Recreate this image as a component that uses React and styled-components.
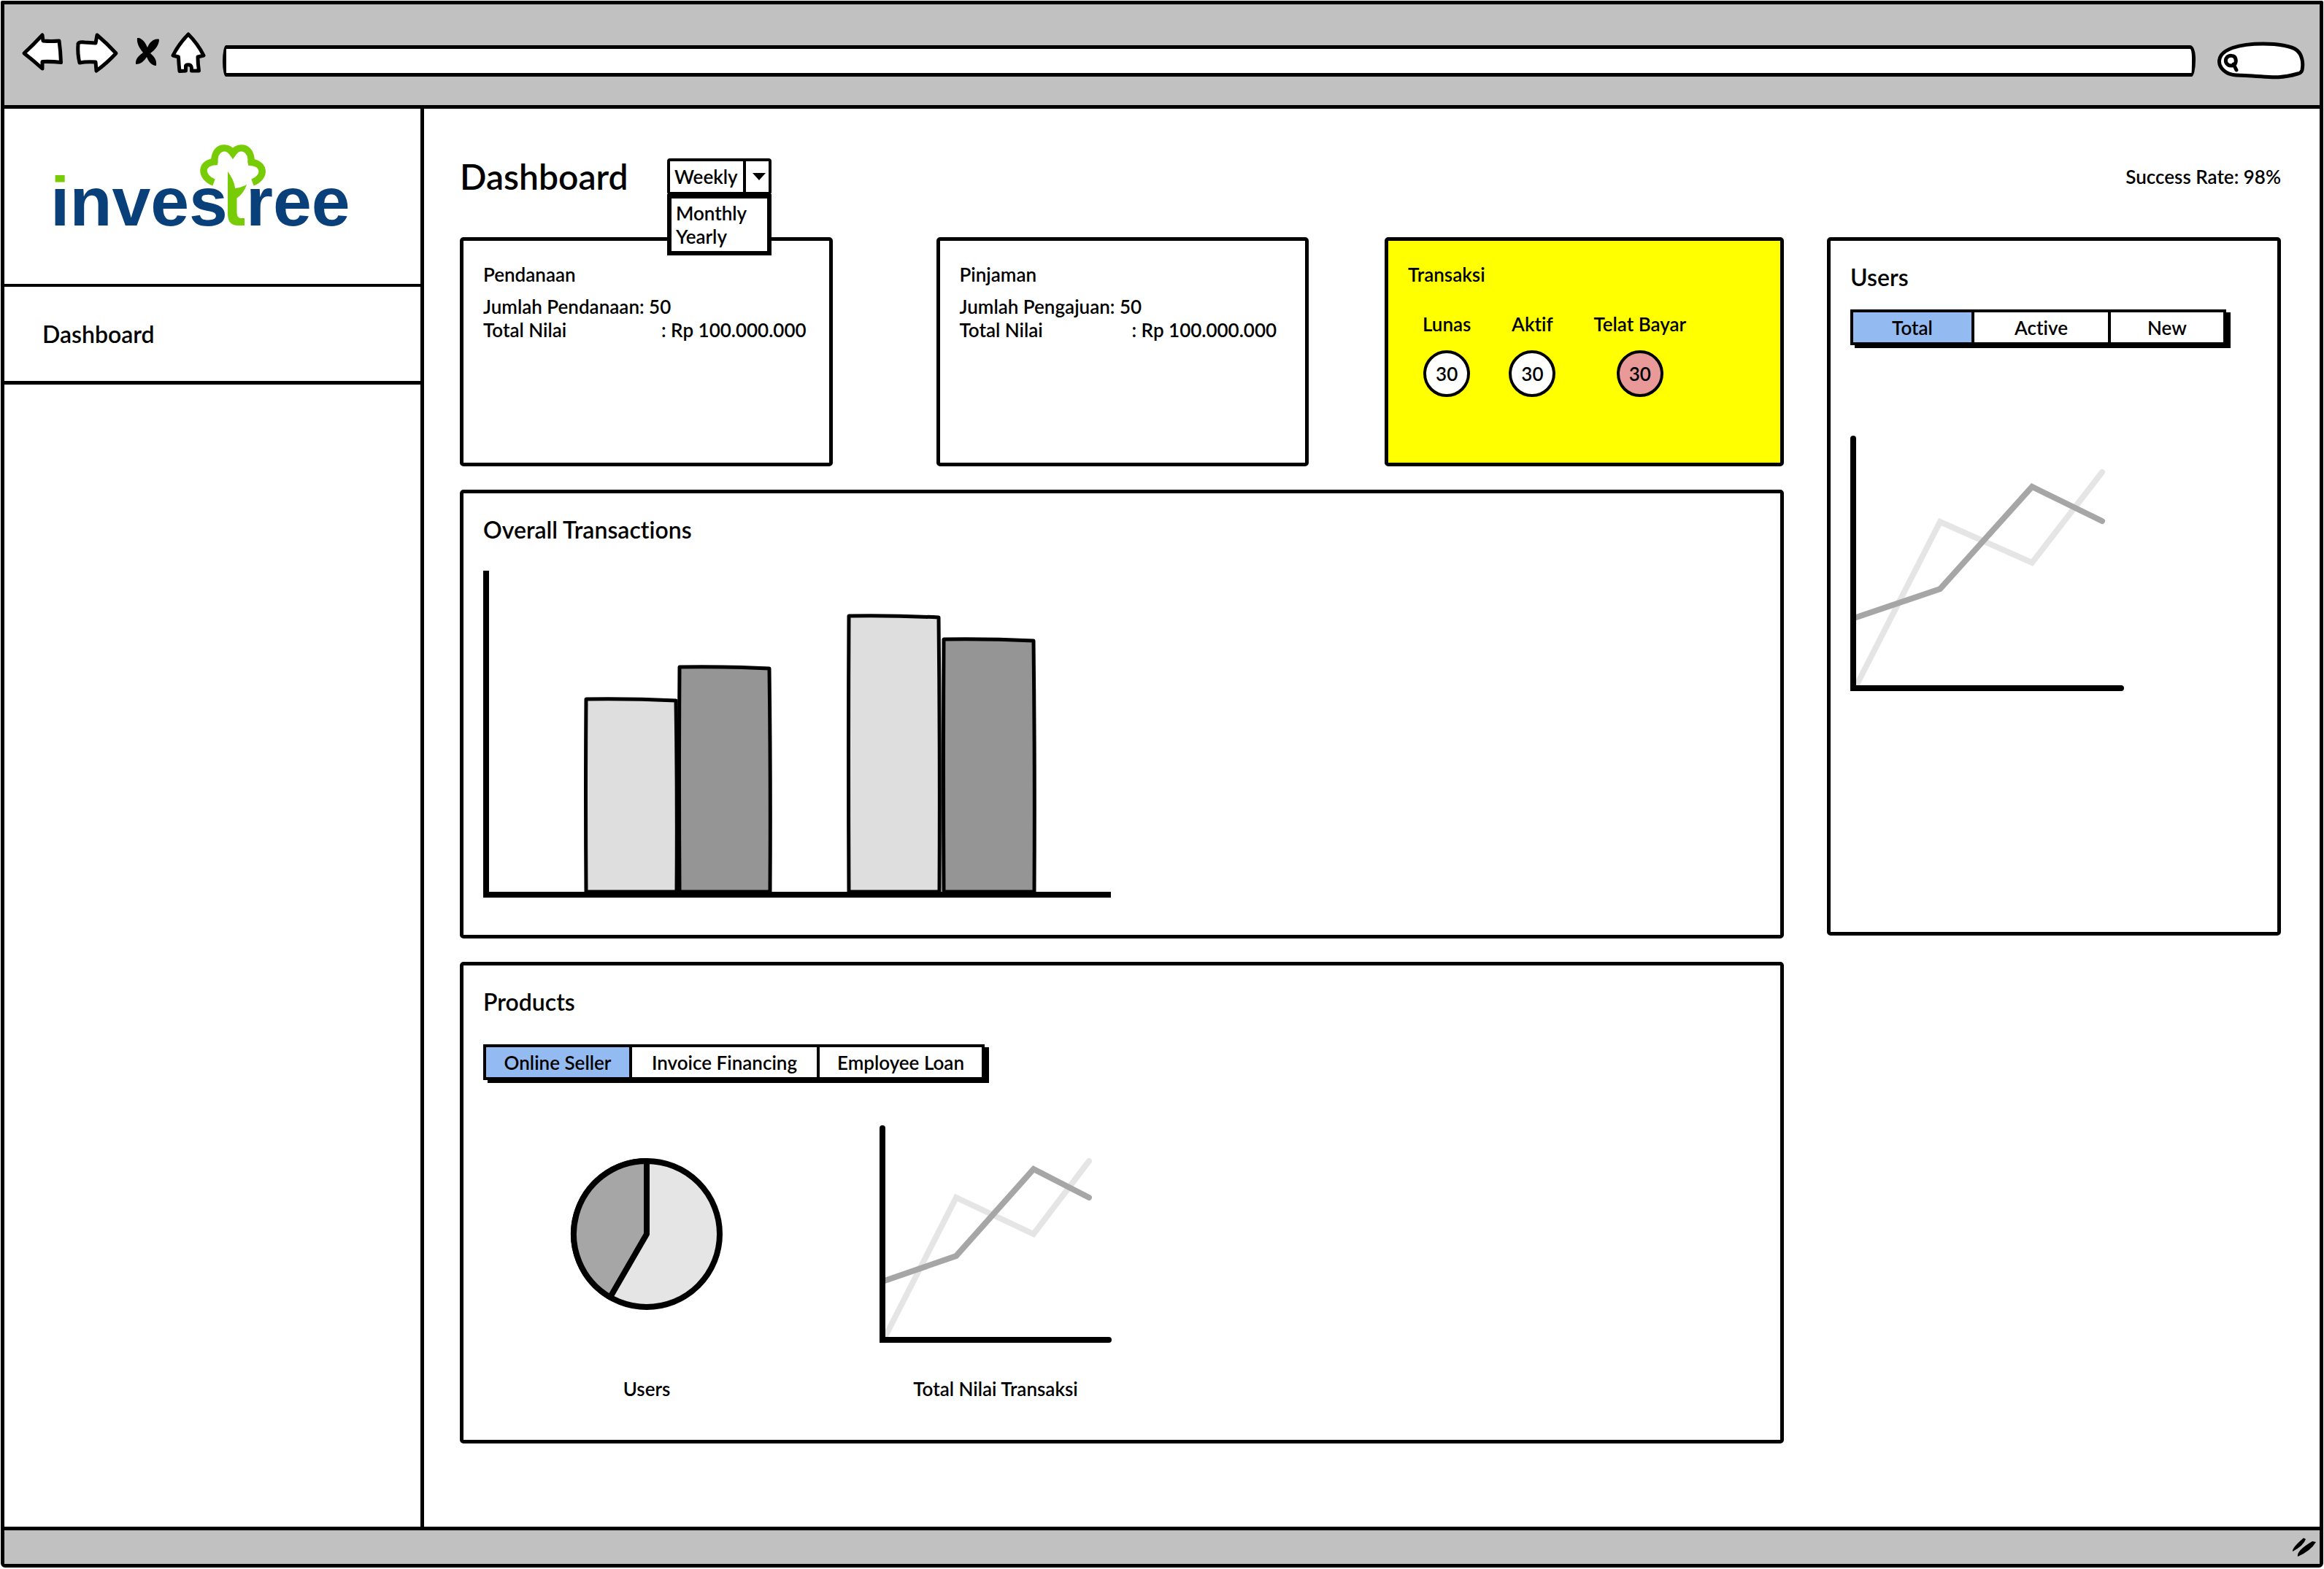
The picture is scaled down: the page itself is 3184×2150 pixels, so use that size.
import React, { useState } from "react";
import styled, { createGlobalStyle } from "styled-components";

const ink = "#000";
const chrome = "#c1c1c1";
const green = "#77cc05";
const navy = "#0a4079";

const GlobalStyle = createGlobalStyle`
  *, *::before, *::after { box-sizing: border-box; }
  body {
    margin: 0;
    background: #fff;
    color: ${ink};
    font-family: Lato, "Open Sans", sans-serif;
    font-size: 26px;
    font-weight: 600;
    font-variant-ligatures: none;
    line-height: 32px;
  }
  button, input, select { font: inherit; color: inherit; }
`;

/* ---------- browser frame ---------- */

const Page = styled.div`
  display: flex;
  min-height: 100vh;
  padding: 1px 1px 2px 1px;
`;

const Window = styled.div`
  flex: 1;
  display: flex;
  flex-direction: column;
  border: 5px solid ${ink};
  border-radius: 2px 2px 6px 6px;
  overflow: hidden;
`;

const Toolbar = styled.header`
  display: flex;
  align-items: center;
  height: 143px;
  padding: 0 20px 0 24px;
  background: ${chrome};
  border-bottom: 5px solid ${ink};
`;

const NavButtons = styled.nav`
  display: flex;
  align-items: center;
  gap: 18px;
  margin: 0 24px 4px 0;
`;

const IconButton = styled.button`
  display: flex;
  padding: 0;
  border: 0;
  background: none;
  cursor: pointer;
`;

const AddressBar = styled.input`
  flex: 1;
  min-width: 0;
  height: 43px;
  margin-top: 16px;
  padding: 0 12px;
  border: 5px solid ${ink};
  border-radius: 5px 8px 6px 5px / 24px 18px 24px 22px;
  background: #fff;
`;

const SearchBox = styled.label`
  position: relative;
  display: flex;
  width: 120px;
  height: 52px;
  margin: 16px 0 0 30px;
`;

const SearchShape = styled.svg`
  position: absolute;
  inset: 0;
`;

const SearchInput = styled.input`
  position: relative;
  width: 100%;
  padding: 0 12px 0 36px;
  border: 0;
  background: transparent;
`;

const StatusBar = styled.footer`
  display: flex;
  align-items: center;
  justify-content: flex-end;
  height: 51px;
  padding-right: 4px;
  background: ${chrome};
  border-top: 5px solid ${ink};
`;

const Body = styled.div`
  flex: 1;
  display: flex;
`;

/* ---------- sidebar ---------- */

const Sidebar = styled.aside`
  flex: none;
  width: 575px;
  border-right: 5px solid ${ink};
`;

const Brand = styled.div`
  height: 244px;
  padding: 48px 0 0 64px;
  border-bottom: 4px solid ${ink};
`;

const SideLink = styled.a`
  display: flex;
  align-items: center;
  height: 134px;
  padding-left: 52px;
  border-bottom: 5px solid ${ink};
  color: inherit;
  font-size: 32px;
  line-height: 40px;
  text-decoration: none;
`;

/* ---------- main area ---------- */

const Main = styled.main`
  flex: 1;
  min-width: 0;
  padding: 68px 53px 40px 49px;
`;

const PageHeader = styled.div`
  display: flex;
  align-items: center;
  margin-bottom: 58px;
`;

const PageTitle = styled.h1`
  margin: 0;
  width: 284px;
  font-size: 48px;
  font-weight: 600;
  line-height: 48px;
`;

const SuccessRate = styled.p`
  margin: 0 0 0 auto;
`;

const Combo = styled.div`
  position: relative;
  width: 143px;
`;

const PeriodSelect = styled.select`
  display: block;
  width: 100%;
  height: 50px;
  padding: 0 36px 0 6px;
  border: 4px solid ${ink};
  border-radius: 4px;
  background: #fff;
  appearance: none;
`;

const ComboArrow = styled.span`
  position: absolute;
  top: 0;
  right: 0;
  display: flex;
  align-items: center;
  justify-content: center;
  width: 39px;
  height: 50px;
  border-left: 4px solid ${ink};
  pointer-events: none;
`;

const ComboList = styled.ul`
  position: absolute;
  top: 49px;
  left: 0;
  z-index: 1;
  width: 100%;
  margin: 0;
  padding: 4px 6px;
  border: 6px solid ${ink};
  background: #fff;
  list-style: none;
`;

const Columns = styled.div`
  display: grid;
  grid-template-columns: 1814fr 622fr;
  align-items: start;
  gap: 59px;
`;

const Stack = styled.div`
  display: flex;
  flex-direction: column;
  gap: 32px;
`;

const SummaryRow = styled.div`
  display: grid;
  grid-template-columns: 1163fr 547fr;
  gap: 104px;
`;

const SummaryPair = styled.div`
  display: grid;
  grid-template-columns: 1fr 1fr;
  gap: 142px;
`;

const Panel = styled.section`
  min-height: ${(p) => p.$minHeight}px;
  padding: 30px 27px 50px;
  border: 5px solid ${ink};
  border-radius: 5px;
  background: ${(p) => p.$fill || "#fff"};
`;

const CardTitle = styled.h2`
  margin: 0 0 12px;
  font-size: 26px;
  font-weight: 600;
  line-height: 32px;
`;

const PanelTitle = styled.h2`
  margin: 0 0 ${(p) => p.$gap}px;
  font-size: 32px;
  font-weight: 600;
  line-height: 40px;
`;

const Facts = styled.dl`
  margin: 0;
`;

const Fact = styled.div`
  display: flex;
  white-space: pre;
`;

const Term = styled.dt`
  width: ${(p) => (p.$width ? `${p.$width}px` : "auto")};
`;

const Value = styled.dd`
  margin: 0;
`;

const Counters = styled.div`
  display: flex;
  gap: 52px;
  padding: 24px 0 0 20px;
`;

const Counter = styled.div`
  display: flex;
  flex-direction: column;
  align-items: center;
  gap: 20px;
`;

const Bubble = styled.output`
  display: flex;
  align-items: center;
  justify-content: center;
  width: 64px;
  height: 64px;
  border: 4px solid ${ink};
  border-radius: 50%;
  background: ${(p) => p.$fill};
`;

const TabBar = styled.div`
  display: flex;
  width: fit-content;
  height: 49px;
  border: 4px solid ${ink};
  box-shadow: 6px 4px 0 ${ink};
`;

const Tab = styled.button`
  width: ${(p) => p.$width}px;
  padding: 0;
  border: 0;
  background: ${(p) => (p.$active ? "#94baf2" : "#fff")};
  cursor: pointer;

  & + & { border-left: 4px solid ${ink}; }
`;

const UsersChart = styled.div`
  padding-top: 124px;
`;

const Figures = styled.div`
  display: flex;
  gap: 215px;
  padding: 62px 0 0 120px;
`;

const Figure = styled.figure`
  display: flex;
  flex-direction: column;
  align-items: center;
  gap: 47px;
  margin: 0;
`;

const FigureArt = styled.div`
  display: flex;
  align-items: center;
  height: 298px;
`;

const Drawing = styled.svg`
  display: block;
  overflow: visible;
`;

/* ---------- drawings ---------- */

const BackIcon = () => (
  <Drawing width="56" height="56" viewBox="31 47 56 56" fill="#fff" stroke={ink} strokeWidth="5" strokeLinejoin="round">
    <path d="M34 75Q47 63 59 50L60 58Q71 59 82 58Q84 72 84.500 87.500Q72 86 59 86.500L59 96Q47 85 34 75Z" />
  </Drawing>
);

const ForwardIcon = () => (
  <Drawing width="57" height="56" viewBox="106 47 57 56" fill="#fff" stroke={ink} strokeWidth="5" strokeLinejoin="round">
    <path d="M109 62Q110 59 118 60L133 61L135 50Q148 61 161 75Q148 89 134 99L133 87Q121 86 111 88Q108 76 109 62Z" />
  </Drawing>
);

const StopIcon = () => (
  <Drawing width="38" height="44" viewBox="181 51 38 44" fill={ink}>
    <path d="M190 52C197 51 202 60 204 65C207 58 213 52 220 54C220 62 214 69 208 73C214 78 217 83 216 90C209 90 205 83 203 78C200 83 195 88 188 88C187 80 193 76 198 72C193 66 189 59 190 52Z" />
  </Drawing>
);

const HomeIcon = () => (
  <Drawing width="46" height="56" viewBox="237 46 46 56" fill="#fff" stroke={ink} strokeWidth="5" strokeLinejoin="round">
    <path d="M260 48Q273 61 281 77L273 79Q273 88 274.500 98L264.500 98Q265 91 262 90Q258 89 256.500 91L256.500 98L248 98.500Q247 90 246.500 79L239 77Q247 61 260 48Z" />
  </Drawing>
);

const Logo = () => (
  <Drawing width="410" height="130" viewBox="70 197 410 130" role="img" aria-label="investree">
    <defs>
      <linearGradient id="letter-i" gradientUnits="userSpaceOnUse" x1="0" y1="230" x2="0" y2="320">
        <stop offset="0.26" stopColor={green} />
        <stop offset="0.26" stopColor={navy} />
      </linearGradient>
    </defs>
    <g fontFamily="'Liberation Sans', Arial, sans-serif" fontWeight="700" fontSize="95" fill={navy}>
      <text x="69" y="309">
        <tspan fill="url(#letter-i)">i</tspan>
        <tspan>nves</tspan>
      </text>
      <text x="337" y="309">ree</text>
    </g>
    <g fill="none" stroke={green} strokeWidth="9.500">
      <path d="M293 250C274 243 273 221 298 221.500" />
      <path d="M294 224C292 202 310 197 319 210C328 197 346 202 344 224" />
      <path d="M340 222C364 222 365 243 346 250" />
    </g>
    <path
      fill={green}
      d="M312 235Q321 247 322 258Q331 257 338 253Q334 265 324.500 271.500L324.500 292Q325 299 330 299L335 299L335 309L326 309Q312 309 312 293Z"
    />
  </Drawing>
);

const ResizeGrip = () => (
  <Drawing width="34" height="28" viewBox="3140 2111 34 28" fill={ink}>
    <path d="M3141 2131Q3140 2126 3156 2112.500L3159 2114Q3156 2123 3141 2131Z" />
    <path d="M3148 2138Q3146 2130 3168 2117L3173 2118Q3166 2130 3148 2138Z" />
  </Drawing>
);

function BarChart() {
  const base = 442;
  const bars = [
    { x: 141, h: 266, fill: "#dedede" },
    { x: 269, h: 310, fill: "#959595" },
    { x: 501, h: 380, fill: "#dedede" },
    { x: 631, h: 348, fill: "#959595" },
  ];
  return (
    <Drawing width="860" height="448" viewBox="0 0 860 448" role="img" aria-label="Overall transactions">
      {bars.map(({ x, h, fill }) => (
        <path
          key={x}
          d={`M${x} ${base - h}Q${x + 60} ${base - h - 1} ${x + 123} ${base - h + 2}Q${x + 125} ${base - h / 2} ${x + 124} ${base - 2}H${x}Q${x - 1} ${base - h / 2} ${x} ${base - h}Z`}
          fill={fill}
          stroke={ink}
          strokeWidth="5"
          strokeLinejoin="round"
        />
      ))}
      <path d="M4 0V444H860" fill="none" stroke={ink} strokeWidth="8" />
    </Drawing>
  );
}

function LineChart({ width, height, label, light, dark }) {
  const left = 4;
  const bottom = height - 4;
  const spanX = width - 8;
  const spanY = height - 8;
  const line = (points) =>
    points.map(([x, y]) => `${Math.round(left + x * spanX)},${Math.round(bottom - y * spanY)}`).join(" ");
  return (
    <Drawing width={width} height={height} viewBox={`0 0 ${width} ${height}`} role="img" aria-label={label}>
      <g fill="none" strokeWidth="8" strokeLinecap="round">
        <polyline stroke="#e5e5e5" points={line(light)} />
        <polyline stroke="#a6a6a6" points={line(dark)} />
        <polyline stroke={ink} points={`${left},4 ${left},${bottom} ${width - 4},${bottom}`} />
      </g>
    </Drawing>
  );
}

const PieChart = () => (
  <Drawing width="208" height="208" viewBox="0 0 208 208" role="img" aria-label="Users by product">
    <g stroke={ink} strokeWidth="8" strokeLinejoin="round">
      <circle cx="104" cy="104" r="100" fill="#e5e5e5" />
      <path d="M104 104V4A100 100 0 0 0 54 190.600Z" fill="#a6a6a6" />
    </g>
  </Drawing>
);

/* ---------- data ---------- */

const counters = [
  { label: "Lunas", value: 30, fill: "#fff" },
  { label: "Aktif", value: 30, fill: "#fff" },
  { label: "Telat Bayar", value: 30, fill: "#ea9999" },
];

const productTabs = [
  { name: "Online Seller", width: 196 },
  { name: "Invoice Financing", width: 257 },
  { name: "Employee Loan", width: 226 },
];

const userTabs = [
  { name: "Total", width: 162 },
  { name: "Active", width: 187 },
  { name: "New", width: 158 },
];

const userTrend = {
  light: [[0.01, 0.01], [0.325, 0.668], [0.667, 0.502], [0.928, 0.866]],
  dark: [[0.01, 0.285], [0.325, 0.397], [0.667, 0.806], [0.928, 0.669]],
};

const valueTrend = {
  light: [[0.01, 0.01], [0.325, 0.671], [0.667, 0.5], [0.914, 0.845]],
  dark: [[0.01, 0.281], [0.325, 0.398], [0.667, 0.807], [0.914, 0.671]],
};

/* ---------- pieces ---------- */

function Tabs({ label, items }) {
  const [active, setActive] = useState(items[0].name);
  return (
    <TabBar role="tablist" aria-label={label}>
      {items.map(({ name, width }) => (
        <Tab
          key={name}
          type="button"
          role="tab"
          aria-selected={active === name}
          $active={active === name}
          $width={width}
          onClick={() => setActive(name)}
        >
          {name}
        </Tab>
      ))}
    </TabBar>
  );
}

function LoanCard({ title, countLabel, count, total, labelWidth }) {
  return (
    <Panel $minHeight={314}>
      <CardTitle>{title}</CardTitle>
      <Facts>
        <Fact>
          <Term>{countLabel}: </Term>
          <Value>{count}</Value>
        </Fact>
        <Fact>
          <Term $width={labelWidth}>Total Nilai</Term>
          <Value>: {total}</Value>
        </Fact>
      </Facts>
    </Panel>
  );
}

function PeriodCombo() {
  return (
    <Combo>
      <PeriodSelect aria-label="Period" defaultValue="Weekly">
        <option>Weekly</option>
        <option>Monthly</option>
        <option>Yearly</option>
      </PeriodSelect>
      <ComboArrow>
        <Drawing width="18" height="10" viewBox="0 0 18 10">
          <path d="M0 0H18L9 10Z" />
        </Drawing>
      </ComboArrow>
      <ComboList>
        <li>Monthly</li>
        <li>Yearly</li>
      </ComboList>
    </Combo>
  );
}

export default function App() {
  return (
    <Page>
      <GlobalStyle />
      <Window>
        <Toolbar>
          <NavButtons aria-label="Browser">
            <IconButton type="button" aria-label="Back"><BackIcon /></IconButton>
            <IconButton type="button" aria-label="Forward"><ForwardIcon /></IconButton>
            <IconButton type="button" aria-label="Stop"><StopIcon /></IconButton>
            <IconButton type="button" aria-label="Home"><HomeIcon /></IconButton>
          </NavButtons>
          <AddressBar type="text" aria-label="Address" />
          <SearchBox>
            <SearchShape width="120" height="52" viewBox="3040 56 120 52" aria-hidden="true">
              <path
                d="M3066 102C3050 101 3042 91 3042.500 82C3044 66 3070 59 3103 59C3122 59 3142 62 3149 68C3156 74 3158 85 3156 95Q3155 99 3150 100C3122 108 3112 104 3078 102.500Z"
                fill="#fff"
                stroke={ink}
                strokeWidth="5"
                strokeLinejoin="round"
              />
              <path
                d="M3065 80C3064 74 3055 74 3052 79C3050 84 3053 89 3059 89C3064 89 3066 85 3065 80M3062 87L3066 95"
                fill="none"
                stroke={ink}
                strokeWidth="5"
                strokeLinecap="round"
              />
            </SearchShape>
            <SearchInput type="text" aria-label="Search" />
          </SearchBox>
        </Toolbar>

        <Body>
          <Sidebar>
            <Brand><Logo /></Brand>
            <SideLink href="#dashboard">Dashboard</SideLink>
          </Sidebar>

          <Main>
            <PageHeader>
              <PageTitle>Dashboard</PageTitle>
              <PeriodCombo />
              <SuccessRate>Success Rate: 98%</SuccessRate>
            </PageHeader>

            <Columns>
              <Stack>
                <SummaryRow>
                  <SummaryPair>
                    <LoanCard
                      title="Pendanaan"
                      countLabel="Jumlah Pendanaan"
                      count={50}
                      total="Rp 100.000.000"
                      labelWidth={244}
                    />
                    <LoanCard
                      title="Pinjaman"
                      countLabel="Jumlah Pengajuan"
                      count={50}
                      total="Rp 100.000.000"
                      labelWidth={236}
                    />
                  </SummaryPair>
                  <Panel $minHeight={314} $fill="#ff0">
                    <CardTitle>Transaksi</CardTitle>
                    <Counters>
                      {counters.map(({ label, value, fill }) => (
                        <Counter key={label}>
                          <span>{label}</span>
                          <Bubble $fill={fill}>{value}</Bubble>
                        </Counter>
                      ))}
                    </Counters>
                  </Panel>
                </SummaryRow>

                <Panel $minHeight={615}>
                  <PanelTitle $gap={36}>Overall Transactions</PanelTitle>
                  <BarChart />
                </Panel>

                <Panel $minHeight={660}>
                  <PanelTitle $gap={38}>Products</PanelTitle>
                  <Tabs label="Products" items={productTabs} />
                  <Figures>
                    <Figure>
                      <FigureArt><PieChart /></FigureArt>
                      <figcaption>Users</figcaption>
                    </Figure>
                    <Figure>
                      <FigureArt>
                        <LineChart width={318} height={298} label="Total nilai transaksi" {...valueTrend} />
                      </FigureArt>
                      <figcaption>Total Nilai Transaksi</figcaption>
                    </Figure>
                  </Figures>
                </Panel>
              </Stack>

              <Panel $minHeight={957}>
                <PanelTitle $gap={24}>Users</PanelTitle>
                <Tabs label="Users" items={userTabs} />
                <UsersChart>
                  <LineChart width={375} height={350} label="Users" {...userTrend} />
                </UsersChart>
              </Panel>
            </Columns>
          </Main>
        </Body>

        <StatusBar>
          <ResizeGrip />
        </StatusBar>
      </Window>
    </Page>
  );
}
